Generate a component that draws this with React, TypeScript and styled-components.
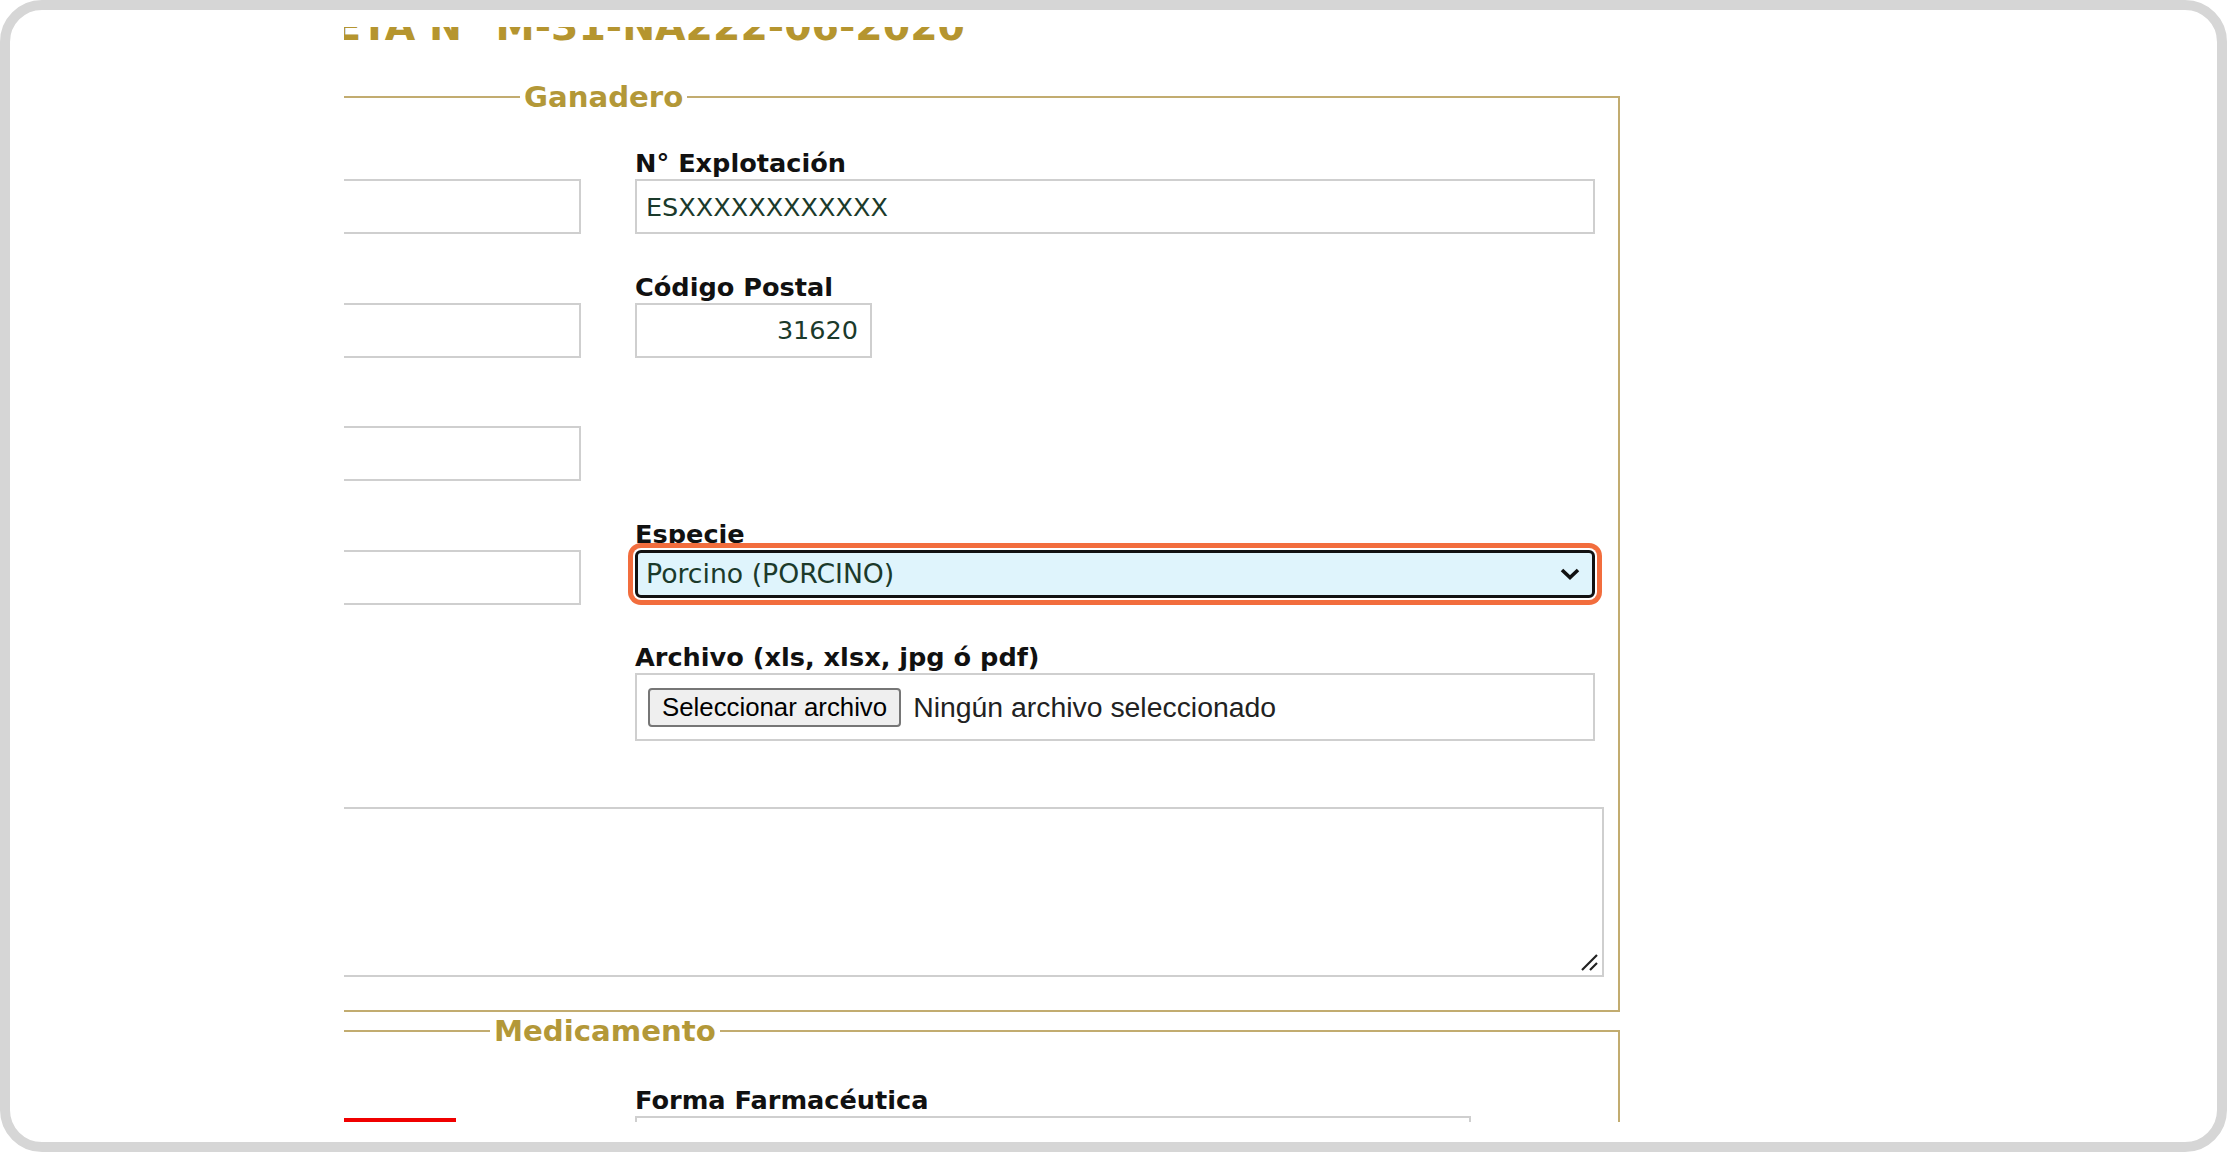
import React from 'react'
import styled, { createGlobalStyle } from 'styled-components'

const colors = {
  frame: '#d6d6d6',
  title: '#b5952f',
  legend: '#b39838',
  line: '#c2ac70',
  inputBorder: '#cfcfcf',
  inputText: '#1b3a2b',
  label: '#111111',
  selectBg: '#dff4fc',
  focus: '#f26d3d',
  red: '#f00000'
}

const GlobalStyle = createGlobalStyle`
  html, body {
    margin: 0;
    padding: 0;
    background: #ffffff;
  }
  body {
    font-family: 'DejaVu Sans', Verdana, sans-serif;
  }
  * {
    box-sizing: border-box;
  }
`

const Frame = styled.div`
  width: 2227px;
  height: 1152px;
  border: 10px solid ${colors.frame};
  border-radius: 42px;
  background: #ffffff;
  padding: 17px 0 20px 334px;
  overflow: hidden;
`
const Viewport = styled.div`
  height: 100%;
  overflow: hidden;
`
const Page = styled.div`
  margin-left: -184px;
  width: 1460px;
`
const Title = styled.h2`
  margin: -20px 0 34px 88px;
  font-size: 39.4px;
  line-height: 39px;
  font-weight: bold;
  color: ${colors.title};
  white-space: nowrap;
`
const Fieldset = styled.fieldset<{ $top: number; $bottom: number; $gap?: number }>`
  margin: ${p => p.$gap || 0}px 0 0 0;
  width: 1460px;
  min-width: 0;
  border: 2px solid ${colors.line};
  padding: ${p => p.$top}px 23px ${p => p.$bottom}px 30px;
`
const Legend = styled.legend<{ $offset: number }>`
  margin-left: ${p => p.$offset}px;
  padding: 0 4px;
  font-size: 29.2px;
  line-height: 34px;
  font-weight: bold;
  color: ${colors.legend};
`
const Grid = styled.div`
  display: grid;
  grid-template-columns: 389px 960px;
  column-gap: 54px;
  row-gap: 37.5px;
  align-items: start;
`
const Field = styled.div`
  display: flex;
  flex-direction: column;
  gap: 2px;
`
const Label = styled.label`
  margin-top: 1px;
  font-size: 25.6px;
  line-height: 28px;
  font-weight: bold;
  color: ${colors.label};
  white-space: nowrap;
`
const TextInput = styled.input<{ $width?: number; $right?: boolean }>`
  width: ${p => (p.$width ? `${p.$width}px` : '100%')};
  height: 55px;
  border: 2px solid ${colors.inputBorder};
  padding: 0 12px 0 9px;
  font-family: 'DejaVu Sans', Verdana, sans-serif;
  font-size: 25.5px;
  color: ${colors.inputText};
  text-align: ${p => (p.$right ? 'right' : 'left')};
  background: #ffffff;
  outline: none;
`
const SelectBox = styled.div`
  display: flex;
  align-items: center;
  justify-content: space-between;
  height: 48px;
  padding: 0 11px 0 8px;
  border: 3px solid #111111;
  border-radius: 6px;
  background: ${colors.selectBg};
  box-shadow: 0 0 0 2px #ffffff, 0 0 0 7px ${colors.focus};
  font-size: 26.7px;
  color: ${colors.inputText};
`
const FileBox = styled.div`
  display: flex;
  align-items: center;
  gap: 12px;
  height: 68px;
  border: 2px solid ${colors.inputBorder};
  padding: 0 11px;
  font-family: 'Liberation Sans', Arial, sans-serif;
  font-size: 28.4px;
  color: #222222;
`
const FileButton = styled.button`
  height: 39px;
  padding: 0 12px;
  border: 2px solid #767676;
  border-radius: 4px;
  background: #efefef;
  font-family: inherit;
  font-size: 25.8px;
  color: #000000;
`
const TextArea = styled.div`
  grid-column: 1 / -1;
  margin-top: 28.5px;
  width: calc(100% + 9px);
  height: 170px;
  border: 2px solid ${colors.inputBorder};
  display: flex;
  align-items: flex-end;
  justify-content: flex-end;
  padding: 0 2px 2px 0;
`
const RedButton = styled.div`
  margin: 33px 0 0 108px;
  width: 156px;
  height: 40px;
  background: ${colors.red};
`

const Chevron = () => (
  <svg width="22" height="14" viewBox="0 0 22 14">
    <path d="M3 3 L11 10.5 L19 3" fill="none" stroke="#111" strokeWidth="3.6" />
  </svg>
)

const Grip = () => (
  <svg width="24" height="24" viewBox="0 0 24 24">
    <path d="M21 6 L6 21 M21 14 L14 21" stroke="#222" strokeWidth="2.2" />
  </svg>
)

const App: React.FC = () => {
  return (
    <>
      <GlobalStyle />
      <Frame>
        <Viewport>
          <Page>
            <Title>RECETA N° M-31-NA222-06-2020</Title>
            <Fieldset $top={34} $bottom={33}>
              <Legend $offset={328}>Ganadero</Legend>
              <Grid>
                <Field>
                  <Label>Titular</Label>
                  <TextInput />
                </Field>
                <Field>
                  <Label>N° Explotación</Label>
                  <TextInput defaultValue="ESXXXXXXXXXXXX" />
                </Field>
                <Field>
                  <Label>NIF</Label>
                  <TextInput />
                </Field>
                <Field>
                  <Label>Código Postal</Label>
                  <TextInput $width={237} $right defaultValue="31620" />
                </Field>
                <Field>
                  <Label>Municipio</Label>
                  <TextInput />
                </Field>
                <div />
                <Field>
                  <Label>Provincia</Label>
                  <TextInput />
                </Field>
                <Field>
                  <Label>Especie</Label>
                  <SelectBox>
                    <span>Porcino (PORCINO)</span>
                    <Chevron />
                  </SelectBox>
                </Field>
                <div />
                <Field>
                  <Label>Archivo (xls, xlsx, jpg ó pdf)</Label>
                  <FileBox>
                    <FileButton>Seleccionar archivo</FileButton>
                    <span>Ningún archivo seleccionado</span>
                  </FileBox>
                </Field>
                <TextArea>
                  <Grip />
                </TextArea>
              </Grid>
            </Fieldset>
            <Fieldset $top={37} $bottom={20} $gap={2}>
              <Legend $offset={298}>Medicamento</Legend>
              <Grid>
                <RedButton />
                <Field>
                  <Label>Forma Farmacéutica</Label>
                  <TextInput $width={836} />
                </Field>
              </Grid>
            </Fieldset>
          </Page>
        </Viewport>
      </Frame>
    </>
  )
}

export default App
